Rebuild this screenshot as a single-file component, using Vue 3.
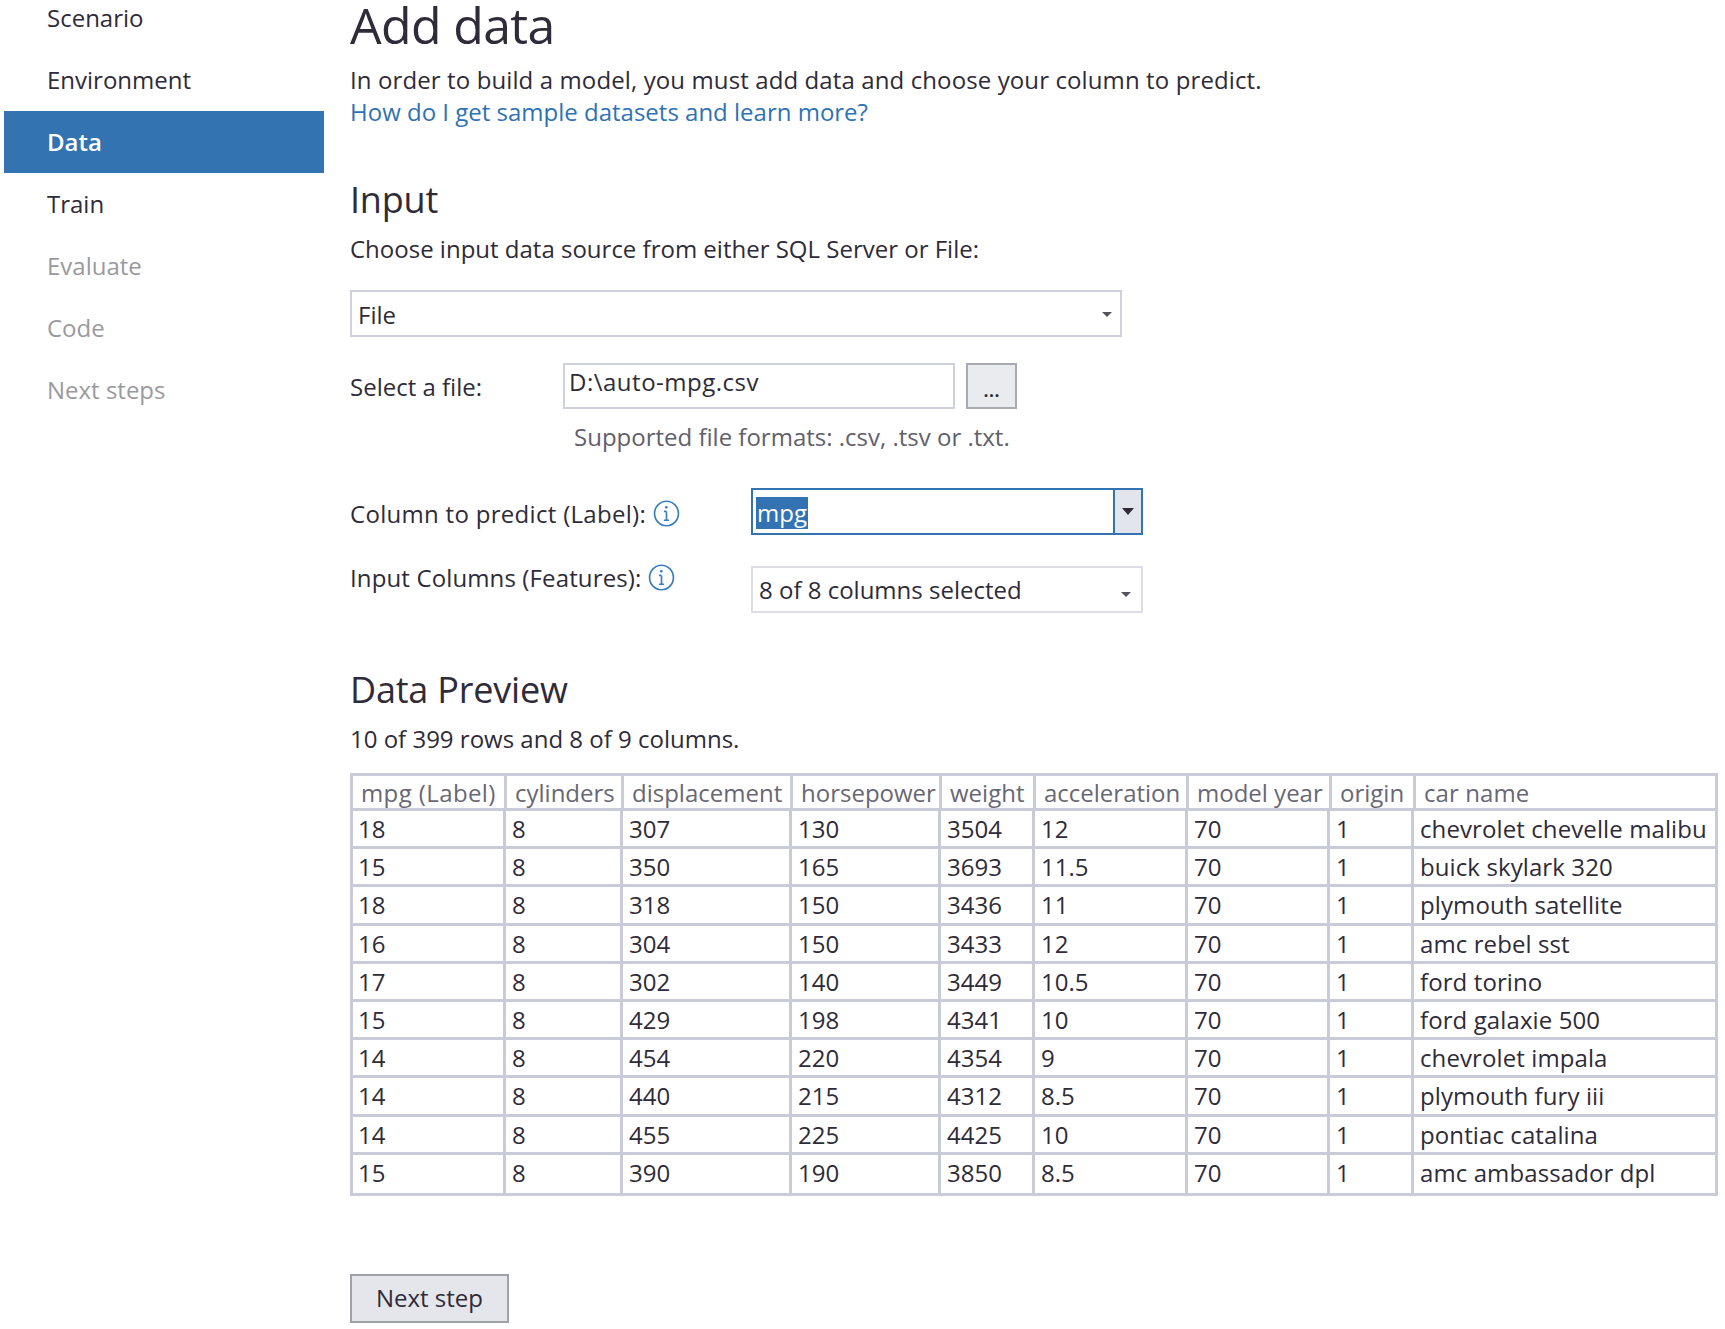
<template>
  <div class="page">
    <!-- Wizard steps -->
    <nav class="steps">
      <div
        v-for="step in steps"
        :key="step.name"
        class="step"
        :class="{ active: step.state === 'active', disabled: step.state === 'disabled' }"
      >
        {{ step.name }}
      </div>
    </nav>

    <main class="content">
      <h1>Add data</h1>
      <p class="intro">In order to build a model, you must add data and choose your column to predict.</p>
      <a class="link">How do I get sample datasets and learn more?</a>

      <h2 class="input-title">Input</h2>
      <p class="source-label">Choose input data source from either SQL Server or File:</p>
      <div class="box source-select">
        <span>File</span>
        <i class="arrow"></i>
      </div>

      <div class="file-row">
        <label>Select a file:</label>
        <div class="box file-input">D:\auto-mpg.csv</div>
        <button class="browse">...</button>
      </div>
      <p class="formats">Supported file formats: .csv, .tsv or .txt.</p>

      <div class="pick-row label-row">
        <label>
          Column to predict (Label):
          <svg class="info" viewBox="0 0 26 26">
            <ellipse cx="13" cy="13" rx="11.5" ry="11.8" />
            <path d="M13 11v8.5M10.5 11H13M10.5 19.5h5" />
            <circle cx="12.8" cy="7" r="1.3" />
          </svg>
        </label>
        <div class="combo">
          <div class="combo-text"><span class="selected">mpg</span></div>
          <div class="combo-btn"><i class="arrow dark"></i></div>
        </div>
      </div>

      <div class="pick-row feature-row">
        <label>
          Input Columns (Features):
          <svg class="info" viewBox="0 0 26 26">
            <ellipse cx="13" cy="13" rx="11.5" ry="11.8" />
            <path d="M13 11v8.5M10.5 11H13M10.5 19.5h5" />
            <circle cx="12.8" cy="7" r="1.3" />
          </svg>
        </label>
        <div class="box features">
          <span>8 of 8 columns selected</span>
          <i class="arrow"></i>
        </div>
      </div>

      <h2 class="preview-title">Data Preview</h2>
      <p class="preview-count">10 of 399 rows and 8 of 9 columns.</p>

      <div class="table">
        <div class="row head">
          <div v-for="col in columns" :key="col" class="cell">{{ col }}</div>
        </div>
        <div v-for="(row, i) in rows" :key="i" class="row">
          <div v-for="(val, j) in row" :key="j" class="cell">{{ val }}</div>
        </div>
      </div>

      <button class="next">Next step</button>
    </main>
  </div>
</template>

<script setup>
const steps = [
  { name: "Scenario", state: "done" },
  { name: "Environment", state: "done" },
  { name: "Data", state: "active" },
  { name: "Train", state: "done" },
  { name: "Evaluate", state: "disabled" },
  { name: "Code", state: "disabled" },
  { name: "Next steps", state: "disabled" },
];

const columns = [
  "mpg (Label)", "cylinders", "displacement", "horsepower", "weight",
  "acceleration", "model year", "origin", "car name",
];

const rows = [
  [18, 8, 307, 130, 3504, 12, 70, 1, "chevrolet chevelle malibu"],
  [15, 8, 350, 165, 3693, 11.5, 70, 1, "buick skylark 320"],
  [18, 8, 318, 150, 3436, 11, 70, 1, "plymouth satellite"],
  [16, 8, 304, 150, 3433, 12, 70, 1, "amc rebel sst"],
  [17, 8, 302, 140, 3449, 10.5, 70, 1, "ford torino"],
  [15, 8, 429, 198, 4341, 10, 70, 1, "ford galaxie 500"],
  [14, 8, 454, 220, 4354, 9, 70, 1, "chevrolet impala"],
  [14, 8, 440, 215, 4312, 8.5, 70, 1, "plymouth fury iii"],
  [14, 8, 455, 225, 4425, 10, 70, 1, "pontiac catalina"],
  [15, 8, 390, 190, 3850, 8.5, 70, 1, "amc ambassador dpl"],
];
</script>

<style>
html, body {
  margin: 0;
  background: #fff;
  overflow: hidden;
}
</style>

<style scoped>
.page {
  display: flex;
  height: 1329px;
  overflow: hidden;
  font-family: "Open Sans", "Noto Sans", sans-serif;
  font-size: 24px;
  letter-spacing: 0;
  color: #2f2b38;
}
.steps {
  flex: none;
  width: 320px;
  margin: -13px 1px 0 4px;
}
.step {
  height: 62px;
  line-height: 62px;
  padding-left: 43px;
}
.step.active {
  background: #3373b1;
  color: #fff;
  font-weight: 600;
}
.step.disabled {
  color: #9a9a9e;
}
.content {
  flex: 1;
  padding-left: 25px;
}
h1 {
  margin: 0;
  font-size: 50px;
  line-height: 50px;
  font-weight: 400;
  letter-spacing: -0.65px;
}
p {
  margin: 0;
}
.intro {
  margin-top: 14px;
  line-height: 32px;
  letter-spacing: 0.11px;
}
.link {
  display: block;
  line-height: 32px;
  color: #2f72b3;
}
h2 {
  margin: 0;
  font-size: 36px;
  line-height: 44px;
  font-weight: 400;
  letter-spacing: -0.2px;
}
.input-title {
  margin-top: 50px;
}
.source-label {
  margin-top: 11px;
  line-height: 32px;
}
.box {
  box-sizing: border-box;
  border: 2px solid #cfd1de;
  background: #fff;
}
.source-select {
  display: flex;
  align-items: center;
  justify-content: space-between;
  width: 772px;
  height: 47px;
  margin-top: 25px;
  padding: 2px 8px 0 6px;
}
.arrow {
  display: block;
  width: 0;
  height: 0;
  border-left: 5px solid transparent;
  border-right: 5px solid transparent;
  border-top: 5px solid #55525c;
}
.arrow.dark {
  border-left-width: 6px;
  border-right-width: 6px;
  border-top-width: 7px;
  border-top-color: #2f2b38;
}
.file-row {
  display: flex;
  align-items: center;
  margin-top: 26px;
}
.file-row label {
  width: 213px;
}
.file-input {
  width: 392px;
  height: 46px;
  line-height: 33px;
  padding-left: 4px;
  letter-spacing: 0.5px;
}
.browse {
  width: 51px;
  height: 46px;
  margin-left: 11px;
  padding: 6px 0 0;
  border: 2px solid #a9a9b3;
  background: #e9ebef;
  font: inherit;
  font-size: 20px;
  font-weight: 600;
  color: #2f2b38;
}
.formats {
  margin: 12px 0 0 224px;
  line-height: 32px;
  color: #62606a;
}
.pick-row {
  display: flex;
}
.pick-row label {
  display: flex;
  align-items: center;
  gap: 7px;
  width: 401px;
  white-space: nowrap;
}
.label-row {
  align-items: center;
  margin-top: 35px;
}
.label-row label {
  padding-top: 3px;
  letter-spacing: 0.3px;
}
.feature-row {
  margin-top: 31px;
}
.feature-row label {
  height: 22px;
  letter-spacing: 0.13px;
}
.info {
  flex: none;
  width: 27px;
  height: 27px;
  fill: none;
  stroke: #3a7cc0;
  stroke-width: 1.6;
}
.info circle {
  fill: #3a7cc0;
  stroke: none;
}
.combo {
  display: flex;
  box-sizing: border-box;
  width: 392px;
  height: 47px;
  border: 2px solid #3373b1;
}
.combo-text {
  flex: 1;
  display: flex;
  align-items: center;
  padding: 2px 0 0 3px;
}
.selected {
  padding: 0 1px;
  line-height: 32px;
  background: #3373b1;
  color: #fff;
}
.combo-btn {
  display: flex;
  align-items: center;
  justify-content: center;
  width: 26px;
  border-left: 2px solid #3373b1;
  background: #e3e5ec;
}
.features {
  display: flex;
  align-items: center;
  justify-content: space-between;
  width: 392px;
  height: 47px;
  padding: 0 10px 0 6px;
  border-color: #dcdde6;
}
.features .arrow {
  margin-top: 10px;
}
.preview-title {
  margin-top: 55px;
}
.preview-count {
  margin-top: 11px;
  line-height: 32px;
}
.table {
  box-sizing: border-box;
  width: 1368px;
  margin-top: 18px;
  border: 3px solid #c9cbd9;
}
.row {
  display: grid;
  grid-template-columns: 153px 117px 169px 149px 94px 153px 142px 84px 1fr;
  height: 38.2px;
  box-sizing: border-box;
  border-bottom: 3px solid #c9cbd9;
}
.row:last-child {
  border-bottom: 0;
}
.row.head {
  grid-template-columns: 154px 117px 169px 149px 94px 153px 143px 84px 1fr;
  height: 35px;
  color: #696774;
}
.cell {
  padding-left: 6px;
  border-right: 3px solid #c9cbd9;
  line-height: 36px;
  white-space: nowrap;
}
.cell:first-child {
  padding-left: 5px;
}
.cell:last-child {
  border-right: 0;
  letter-spacing: 0.1px;
}
.head .cell {
  padding-left: 8px;
  line-height: 33px;
}
.head .cell:first-child {
  letter-spacing: 0.4px;
}
.next {
  display: block;
  width: 159px;
  height: 49px;
  margin-top: 78px;
  padding: 0 0 2px;
  border: 2px solid #a0a0ab;
  background: #e4e6eb;
  font: inherit;
  color: #2f2b38;
}
</style>
